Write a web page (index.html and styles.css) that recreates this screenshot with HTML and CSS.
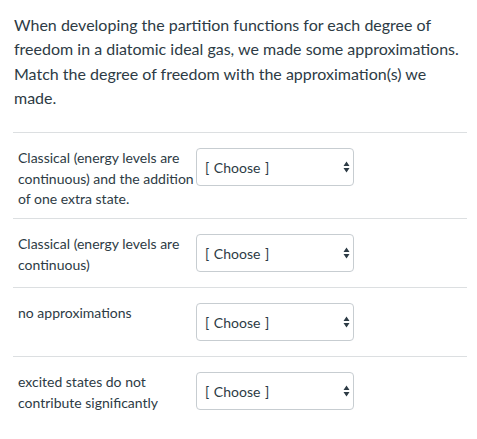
FILE: index.html
```html
<!DOCTYPE html>
<html>

<head>
  <title>Matching Question</title>
  <link rel="stylesheet" href="styles.css">
</head>

<body>
  <!-- Question prompt -->
  <div class="question">
    <p>When developing the partition functions for each degree of freedom in a diatomic ideal gas, we made some approximations. Match the degree of freedom with the approximation(s) we made.</p>
  </div>

  <!-- Answer rows: label on the left, dropdown on the right -->
  <div class="answers">
    <div class="row">
      <div class="label">Classical (energy levels are continuous) and the addition of one extra state.</div>
      <div class="select">
        <span>[ Choose ]</span>
        <svg width="7" height="12" viewBox="0 0 7 12"><path d="M3.5 0.5 L6.5 5 H0.5 Z M3.5 11.5 L6.5 7 H0.5 Z" fill="#2d3b45"/></svg>
      </div>
    </div>
    <div class="row">
      <div class="label">Classical (energy levels are continuous)</div>
      <div class="select">
        <span>[ Choose ]</span>
        <svg width="7" height="12" viewBox="0 0 7 12"><path d="M3.5 0.5 L6.5 5 H0.5 Z M3.5 11.5 L6.5 7 H0.5 Z" fill="#2d3b45"/></svg>
      </div>
    </div>
    <div class="row">
      <div class="label">no approximations</div>
      <div class="select">
        <span>[ Choose ]</span>
        <svg width="7" height="12" viewBox="0 0 7 12"><path d="M3.5 0.5 L6.5 5 H0.5 Z M3.5 11.5 L6.5 7 H0.5 Z" fill="#2d3b45"/></svg>
      </div>
    </div>
    <div class="row">
      <div class="label">excited states do not contribute significantly</div>
      <div class="select">
        <span>[ Choose ]</span>
        <svg width="7" height="12" viewBox="0 0 7 12"><path d="M3.5 0.5 L6.5 5 H0.5 Z M3.5 11.5 L6.5 7 H0.5 Z" fill="#2d3b45"/></svg>
      </div>
    </div>
  </div>
</body>

</html>
```

FILE: styles.css
```css
/* Reset and base font */
* {
  margin: 0;
  padding: 0;
  box-sizing: border-box;
}

body {
  font-family: Lato, "Open Sans", sans-serif;
  color: #2d3b45;
  background: #fff;
}

/* Question prompt */
.question {
  padding: 13px 10px 0 14px;
  font-size: 16px;
  line-height: 24.3px;
}

/* Answer list */
.answers {
  margin: 22px 10px 0 13px;
}

.row {
  display: flex;
  align-items: flex-start;
  border-top: 1px solid #dcdfe1;
  padding: 15px 0 0 5px;
}

.label {
  width: 178px;
  font-size: 14px;
  line-height: 20.5px;
  padding-bottom: 8.5px;
}

/* Dropdown look-alike */
.select {
  width: 158px;
  height: 38px;
  border: 1px solid #c7cdd1;
  border-radius: 4px;
  display: flex;
  align-items: center;
  justify-content: space-between;
  padding: 0 3px 0 8px;
  font-size: 14px;
  word-spacing: 1px;
  margin-bottom: 15px;
}

.select svg {
  display: block;
}
```
